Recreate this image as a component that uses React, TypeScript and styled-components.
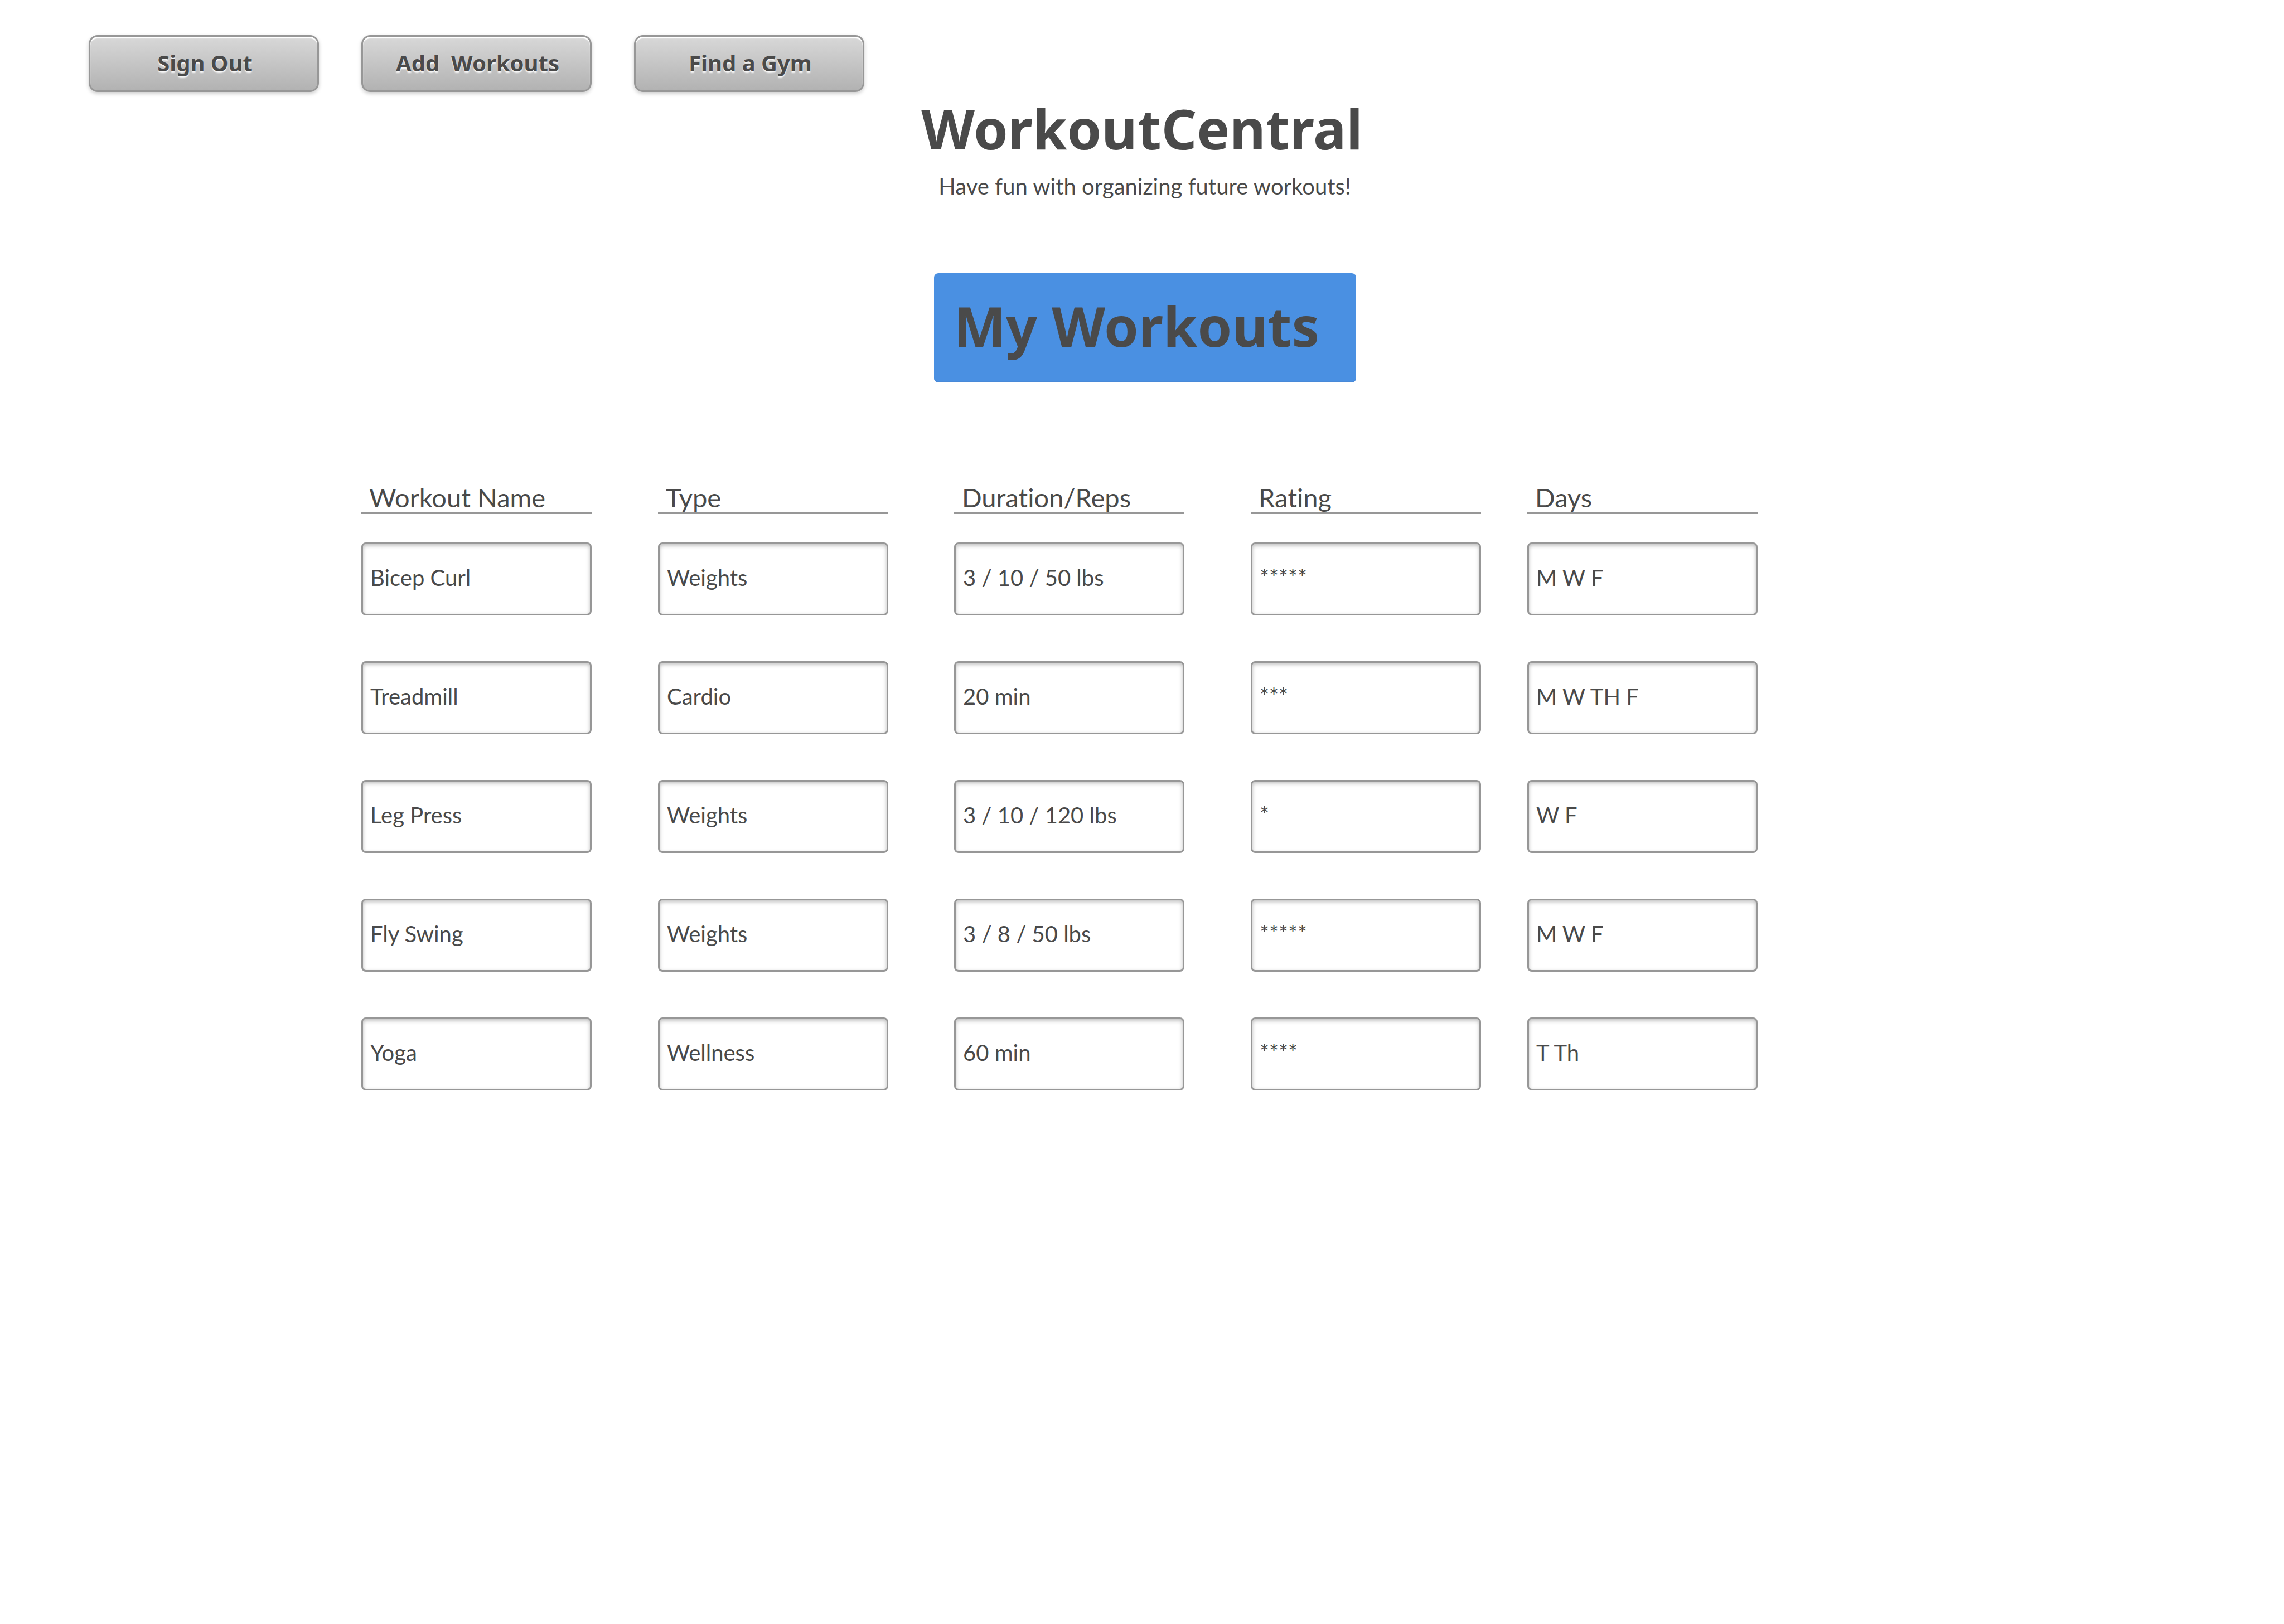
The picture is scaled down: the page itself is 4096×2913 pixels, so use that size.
import React from "react";
import styled, { createGlobalStyle } from "styled-components";

const ink = "#4a4a4a";
const line = "#979797";
const bodyFont = `Lato, "Open Sans", sans-serif`;
const headingFont = `"Noto Sans", "Open Sans", sans-serif`;

const GlobalStyle = createGlobalStyle`
  *, *::before, *::after { box-sizing: border-box; }
  body {
    margin: 0;
    background: #fff;
    color: ${ink};
    font-family: ${bodyFont};
    font-size: 40px;
    font-variant-ligatures: none;
  }
`;

const Page = styled.div`
  display: flex;
  flex-direction: column;
`;

const Nav = styled.nav`
  display: flex;
  gap: 76px;
  padding: 63px 159px 0;
`;

const NavButton = styled.button`
  width: 413px;
  height: 102px;
  padding: 0 0 3px 4px;
  border: 3px solid ${line};
  border-radius: 16px;
  background: linear-gradient(#d8d8d8, #b2b2b2);
  box-shadow: inset 0 3px 1px #fff, 0 3px 7px rgba(0, 0, 0, 0.2);
  color: ${ink};
  font: 700 40px/48px ${headingFont};
  text-shadow: 0 3px 2px rgba(255, 255, 255, 0.85);
  white-space: pre;
`;

const Header = styled.header`
  display: flex;
  flex-direction: column;
  align-items: center;
  padding-top: 5px;
`;

const Title = styled.h1`
  margin: 0;
  font: 700 99px/120px ${headingFont};
`;

const Intro = styled.div`
  display: flex;
  flex-direction: column;
  align-items: center;
  gap: 132px;
  padding: 20px 0 0 10px;
`;

const Tagline = styled.p`
  margin: 0;
  font-size: 40px;
  line-height: 48px;
`;

const Banner = styled.h2`
  width: 757px;
  margin: 0;
  padding: 34px 36px 42px;
  border-radius: 8px;
  background: #4a90e2;
  box-shadow: inset 0 -2px 0 #4889d8;
  font: 700 99px/120px ${headingFont};
  white-space: nowrap;
`;

const Main = styled.main`
  padding: 180px 944px 82px 648px;
`;

const Table = styled.table`
  width: 100%;
  table-layout: fixed;
  border-collapse: collapse;
`;

const Column = styled.col<{ $width?: number }>`
  width: ${({ $width }) => ($width ? `${$width}px` : "auto")};
`;

const HeadCell = styled.th`
  padding: 0 0 51px;
  text-align: left;
  font-weight: 400;
`;

const HeadLabel = styled.div`
  width: 413px;
  padding-left: 14px;
  border-bottom: 3px solid ${line};
  font-size: 47px;
  line-height: 53px;
`;

const Cell = styled.td`
  padding: 0 0 82px;
`;

const Field = styled.input`
  display: block;
  width: 413px;
  height: 131px;
  padding: 0 13px 6px;
  border: 3px solid ${line};
  border-radius: 8px;
  background: #fff;
  box-shadow: inset 0 3px 7px rgba(0, 0, 0, 0.25);
  color: ${ink};
  font: 400 40px/48px ${bodyFont};
`;

const actions = ["Sign Out", "Add  Workouts", "Find a Gym"];

const columns: { label: string; width?: number }[] = [
  { label: "Workout Name", width: 532 },
  { label: "Type", width: 531 },
  { label: "Duration/Reps", width: 532 },
  { label: "Rating", width: 496 },
  { label: "Days" },
];

const workouts = [
  ["Bicep Curl", "Weights", "3 / 10 / 50 lbs", "*****", "M W F"],
  ["Treadmill", "Cardio", "20 min", "***", "M W TH F"],
  ["Leg Press", "Weights", "3 / 10 / 120 lbs", "*", "W F"],
  ["Fly Swing", "Weights", "3 / 8 / 50 lbs", "*****", "M W F"],
  ["Yoga", "Wellness", "60 min", "****", "T Th"],
];

export default function App() {
  return (
    <Page>
      <GlobalStyle />
      <Nav>
        {actions.map((action) => (
          <NavButton key={action} type="button">
            {action}
          </NavButton>
        ))}
      </Nav>
      <Header>
        <Title>WorkoutCentral</Title>
        <Intro>
          <Tagline>Have fun with organizing future workouts!</Tagline>
          <Banner>My Workouts</Banner>
        </Intro>
      </Header>
      <Main>
        <Table>
          <colgroup>
            {columns.map(({ label, width }) => (
              <Column key={label} $width={width} />
            ))}
          </colgroup>
          <thead>
            <tr>
              {columns.map(({ label }) => (
                <HeadCell key={label} scope="col">
                  <HeadLabel>{label}</HeadLabel>
                </HeadCell>
              ))}
            </tr>
          </thead>
          <tbody>
            {workouts.map((workout) => (
              <tr key={workout[0]}>
                {workout.map((value, i) => (
                  <Cell key={columns[i].label}>
                    <Field
                      type="text"
                      aria-label={`${columns[i].label}, ${workout[0]}`}
                      defaultValue={value}
                    />
                  </Cell>
                ))}
              </tr>
            ))}
          </tbody>
        </Table>
      </Main>
    </Page>
  );
}
